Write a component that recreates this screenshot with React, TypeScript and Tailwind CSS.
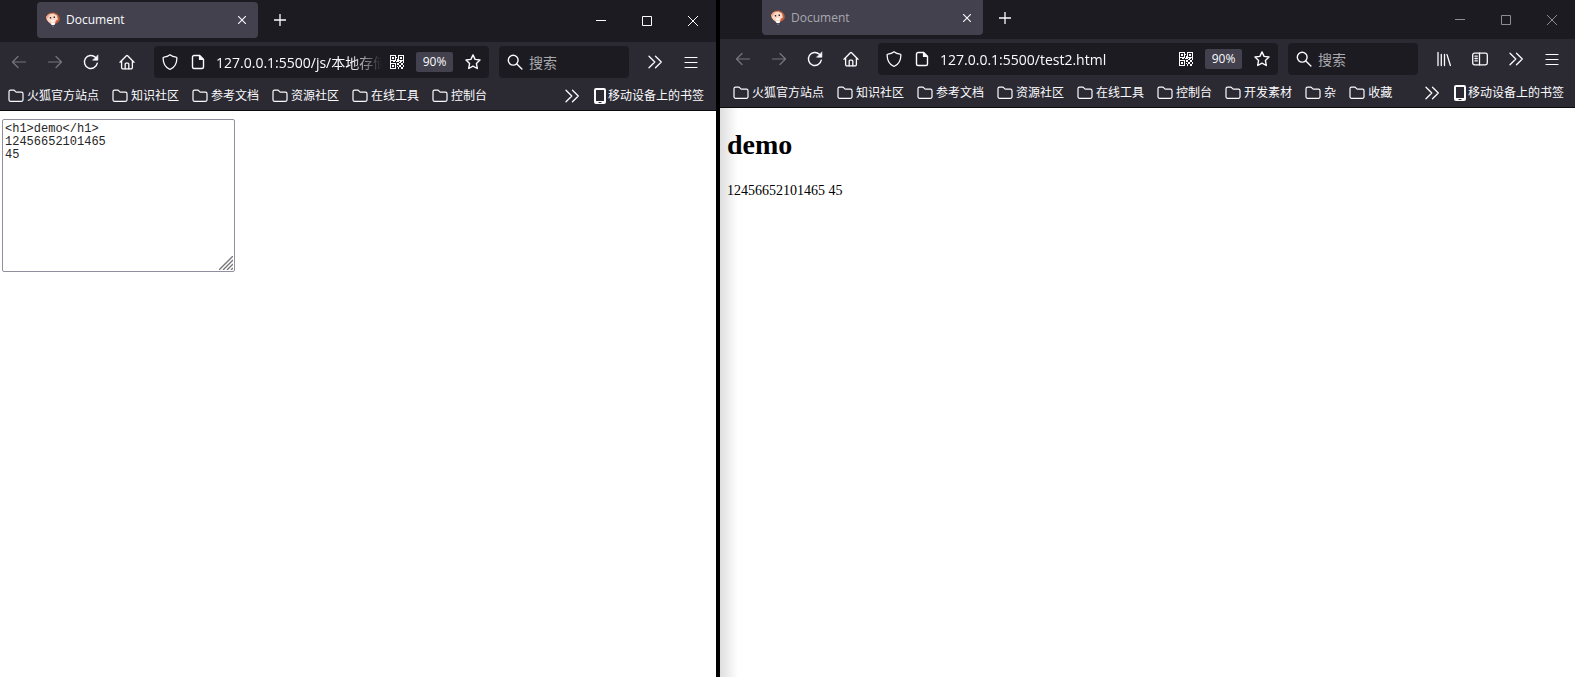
import type { ReactNode } from "react";
import clsx from "clsx";

const Icon = ({ children, size = 16 }: { children: ReactNode; size?: number }) => (
  <svg
    width={size}
    height={size}
    viewBox="0 0 16 16"
    fill="none"
    stroke="currentColor"
    strokeWidth="1.2"
    strokeLinecap="round"
    strokeLinejoin="round"
    className="shrink-0"
    aria-hidden="true"
  >
    {children}
  </svg>
);

const BackIcon = () => (
  <Icon>
    <path d="M14.5 8H1.6M7 2.5 1.5 8 7 13.5" />
  </Icon>
);

const ForwardIcon = () => (
  <Icon>
    <path d="M1.5 8h12.9M9 2.5 14.5 8 9 13.5" />
  </Icon>
);

const ReloadIcon = () => (
  <Icon>
    <path d="M14.3 9.2A6.5 6.5 0 1 1 12.4 3.3" strokeWidth="1.4" />
    <path d="M14.9 1.2v5h-5z" fill="currentColor" strokeWidth=".6" />
  </Icon>
);

const HomeIcon = () => (
  <Icon>
    <path d="M1 8.3 7.4 1.7a.9.9 0 0 1 1.2 0L15 8.3" strokeWidth="1.3" />
    <path d="M2.6 7.2v6.3a1.4 1.4 0 0 0 1.4 1.4h8a1.4 1.4 0 0 0 1.4-1.4V7.2" strokeWidth="1.3" />
    <path d="M6.2 14.8V10a.9.9 0 0 1 .9-.9h1.8a.9.9 0 0 1 .9.9v4.8" strokeWidth="1.3" />
  </Icon>
);

const ShieldIcon = () => (
  <Icon>
    <path
      d="M8 .8c-1.8 1.5-4 2.2-6.1 2.4-.5 0-.8.4-.8.9.1 5 1.8 9.2 6.4 11.1.3.1.7.1 1 0 4.600-1.900 6.300-6.100 6.400-11.100 0-.5-.3-.9-.8-.9C12 3 9.800 2.300 8 .8z"
      strokeWidth="1.3"
    />
  </Icon>
);

const PageIcon = () => (
  <Icon>
    <path
      d="M9.5 1.5H4A1.5 1.5 0 0 0 2.5 3v10A1.5 1.5 0 0 0 4 14.5h8a1.5 1.5 0 0 0 1.5-1.5V5.500z"
      strokeWidth="1.4"
    />
    <path d="M9.5 1.5v4h4z" fill="currentColor" />
  </Icon>
);

const QrIcon = () => (
  <svg
    width="14"
    height="14"
    viewBox="0 0 14 14"
    fill="currentColor"
    fillRule="evenodd"
    shapeRendering="crispEdges"
    className="shrink-0"
    aria-hidden="true"
  >
    <path d="M0 0h6v6H0zM1 1v4h4V1zM2 2h2v2H2z" />
    <path d="M8 0h6v6H8zM9 1v4h4V1zM10 2h2v2h-2z" />
    <path d="M0 8h6v6H0zM1 9v4h4V9zM2 10h2v2H2z" />
    <path d="M6 2h1v1H6zM7 4h1v2H7zM6 6h3v1H6zM3 6h2v1H3zM0 6h1v2H0zM10 6h2v1h-2zM13 6h1v2h-1z" />
    <path d="M9 7h2v1H9zM7 8h2v2H7zM11 8h2v2h-2zM9 10h2v2H9zM13 10h1v1h-1zM7 11h1v1H7zM8 12h1v2H8zM11 12h2v2h-2zM13 11h1v1h-1z" />
  </svg>
);

const StarIcon = () => (
  <Icon>
    <path
      d="m8 .9 2.1 4.5 4.900.6-3.600 3.400.9 5.100L8 12.100l-4.300 2.400.9-5.100L1 6l4.900-.6z"
      strokeWidth="1.4"
    />
  </Icon>
);

const SearchIcon = () => (
  <Icon>
    <circle cx="6.2" cy="6.2" r="4.900" strokeWidth="1.4" />
    <path d="m9.900 9.900 5 5" strokeWidth="1.4" />
  </Icon>
);

const LibraryIcon = () => (
  <Icon>
    <path d="M2 1.500v13M5.300 3.500v11M8.500 3.500v11M11 3.600l3.400 10.900" strokeWidth="1.3" />
  </Icon>
);

const SidebarIcon = () => (
  <Icon>
    <rect x=".7" y="2.2" width="14.6" height="11.6" rx="1.8" strokeWidth="1.3" />
    <path d="M7.500 2.200v11.600M3 5.200h2.300M3 7.500h2.300M3 9.800h2.300" strokeWidth="1.3" />
  </Icon>
);

const ChevronsIcon = () => (
  <Icon>
    <path d="m2 2.200 5.800 5.800L2 13.800M8.500 2.200l5.800 5.800-5.800 5.800" strokeWidth="1.3" />
  </Icon>
);

const MenuIcon = () => (
  <Icon>
    <path d="M2 3.500h12M2 8.500h12M2 13.500h12" />
  </Icon>
);

const FolderIcon = () => (
  <Icon>
    <path
      d="M1 11.800V3.700A1.500 1.500 0 0 1 2.500 2.200h3.200c.4 0 .8.2 1 .5l.8 1c.3.3.6.5 1 .5h5A1.500 1.500 0 0 1 15 5.700v6.100a1.500 1.500 0 0 1-1.500 1.500h-11A1.500 1.500 0 0 1 1 11.800z"
      strokeWidth="1.2"
    />
  </Icon>
);

const PhoneIcon = () => (
  <svg width="12" height="16" viewBox="0 0 12 16" className="shrink-0" aria-hidden="true">
    <path
      d="M2 0h8a2 2 0 0 1 2 2v12a2 2 0 0 1-2 2H2a2 2 0 0 1-2-2V2a2 2 0 0 1 2-2zM2 2v11h8V2zM4.500 14v1h3v-1z"
      fill="currentColor"
      fillRule="evenodd"
    />
  </svg>
);

const CloseIcon = () => (
  <svg width="8" height="8" viewBox="0 0 8 8" stroke="currentColor" strokeWidth="1.1" aria-hidden="true">
    <path d="m0 0 8 8M8 0 0 8" />
  </svg>
);

const PlusIcon = () => (
  <svg width="12" height="12" viewBox="0 0 12 12" stroke="currentColor" strokeWidth="1.3" aria-hidden="true">
    <path d="M6 0v12M0 6h12" />
  </svg>
);

const Favicon = () => (
  <svg width="16" height="16" viewBox="0 0 16 16" className="shrink-0" aria-hidden="true">
    <path d="M2.500 2.500 5 .8l4-.3 3.500 1.500 2 3 .3 3-1.800 2.500-3 1.500-5-.5L1.500 8 1 5z" fill="#b9603c" />
    <path d="M1.500 4.500 4.500 2l4-.5 3.500 2 .8 3.500-1.300 3-2.500 2H6.500L3.500 10 1.800 7.500z" fill="#fbd9c8" />
    <path d="M1 5 3.500 2.300 5.500 2 3.800 4.500 2 7z" fill="#efab8c" />
    <path d="M4.800 5h1.400v1.500H4.800zM8.600 4.500H10V6H8.600z" fill="#3a2226" />
    <path d="M6 8.500 9.800 8l-1 2H7z" fill="#fff" />
    <path d="m11 8.500 2-.5-.8 2.500-2 1z" fill="#d94f30" />
    <path d="M5.500 11h4.700L9.500 13h-3z" fill="#fff" />
    <path d="M7 13.500h2V15H7z" fill="#6c5a9c" />
  </svg>
);

const ToolButton = ({
  label,
  disabled,
  children,
}: {
  label: string;
  disabled?: boolean;
  children: ReactNode;
}) => (
  <button
    aria-label={label}
    disabled={disabled}
    className="flex h-8 w-9 shrink-0 items-center justify-center disabled:text-[#76757d]"
  >
    {children}
  </button>
);

const WindowControls = ({ active }: { active: boolean }) => (
  <div className={clsx("flex h-full", !active && "text-[#8e8d94]")}>
    <button aria-label="最小化" className="flex w-[46px] items-center justify-center">
      <svg width="10" height="10" viewBox="0 0 10 10" stroke="currentColor" aria-hidden="true">
        <path d="M0 4.500h10" />
      </svg>
    </button>
    <button aria-label="最大化" className="flex w-[46px] items-center justify-center">
      <svg width="10" height="10" viewBox="0 0 10 10" fill="none" stroke="currentColor" aria-hidden="true">
        <path d="M.5.5h9v9h-9z" />
      </svg>
    </button>
    <button aria-label="关闭" className="flex w-[46px] items-center justify-center">
      <svg width="10" height="10" viewBox="0 0 10 10" stroke="currentColor" aria-hidden="true">
        <path d="m0 0 10 10M10 0 0 10" />
      </svg>
    </button>
  </div>
);

const Bookmark = ({ name }: { name: string }) => (
  <button className="flex shrink-0 items-center gap-[3px]">
    <FolderIcon />
    {name}
  </button>
);

type BrowserProps = {
  id: string;
  active: boolean;
  url: string;
  bookmarks: string[];
  tools?: ReactNode;
  children: ReactNode;
};

const Browser = ({ id, active, url, bookmarks, tools, children }: BrowserProps) => (
  <section className="flex min-w-0 flex-col overflow-hidden">
    <header className="border-b border-[#0c0c0d] bg-[#2b2a33] font-['Open_Sans','Noto_Sans_CJK_SC',sans-serif] text-[#fbfbfe]">
      <div
        className={clsx(
          "flex items-center justify-between bg-[#1c1b22]",
          active ? "h-[42px] pl-[37px]" : "h-[39px] pl-[42px]"
        )}
      >
        <div className={clsx("flex items-center gap-4 self-start", active && "pt-0.5")}>
          <div
            className={clsx(
              "flex w-[221px] items-center gap-[5px] bg-[#42414d] px-2 text-xs",
              active ? "h-9 rounded" : "h-[35px] rounded-b"
            )}
          >
            <Favicon />
            <span className={clsx("flex-1", !active && "text-[#a9a8b0]")}>Document</span>
            <button aria-label="关闭标签页" className="flex size-4 items-center justify-center">
              <CloseIcon />
            </button>
          </div>
          <button aria-label="新标签页">
            <PlusIcon />
          </button>
        </div>
        <WindowControls active={active} />
      </div>

      <div className={clsx("flex items-center py-1", active ? "pr-[7px] pl-px" : "pr-[5px] pl-[5px]")}>
        <ToolButton label="后退" disabled>
          <BackIcon />
        </ToolButton>
        <ToolButton label="前进" disabled>
          <ForwardIcon />
        </ToolButton>
        <ToolButton label="刷新">
          <ReloadIcon />
        </ToolButton>
        <ToolButton label="主页">
          <HomeIcon />
        </ToolButton>

        <div className="ml-[9px] flex h-8 min-w-0 flex-1 items-center rounded bg-[#1c1b22] px-2">
          <ShieldIcon />
          <label htmlFor={`${id}-url`} aria-label="网址" className="ml-3">
            <PageIcon />
          </label>
          <input
            id={`${id}-url`}
            defaultValue={url}
            className="ml-2.5 h-8 min-w-0 flex-1 bg-transparent text-sm outline-none [mask-image:linear-gradient(to_left,transparent,#000_32px)]"
          />
          <button aria-label="二维码" className="ml-2">
            <QrIcon />
          </button>
          <button className="ml-3 h-5 w-[37px] rounded-xs bg-[#42414d] text-xs">90%</button>
          <button aria-label="添加书签" className="ml-3">
            <StarIcon />
          </button>
        </div>

        <div className="mr-2 ml-2.5 flex h-8 w-[130px] shrink-0 items-center gap-1.5 rounded bg-[#1c1b22] pl-2">
          <label htmlFor={`${id}-search`} aria-label="搜索">
            <SearchIcon />
          </label>
          <input
            id={`${id}-search`}
            placeholder="搜索"
            className="h-8 w-full min-w-0 bg-transparent text-sm outline-none placeholder:text-[#a9a9ad]"
          />
        </div>

        {tools}
        <ToolButton label="更多工具">
          <ChevronsIcon />
        </ToolButton>
        <ToolButton label="菜单">
          <MenuIcon />
        </ToolButton>
      </div>

      <nav
        className={clsx(
          "flex h-7 items-center justify-between text-xs",
          active ? "pr-3 pl-2" : "pr-[11px] pl-[13px]"
        )}
      >
        <div className="flex gap-[13px]">
          {bookmarks.map((name) => (
            <Bookmark key={name} name={name} />
          ))}
        </div>
        <div className="flex items-center gap-3.5">
          <button aria-label="更多书签">
            <ChevronsIcon />
          </button>
          <button className="flex items-center gap-0.5">
            <PhoneIcon />
            移动设备上的书签
          </button>
        </div>
      </nav>
    </header>
    {children}
  </section>
);

const folders = ["火狐官方站点", "知识社区", "参考文档", "资源社区", "在线工具", "控制台"];

export default function App() {
  return (
    <div className="grid min-h-screen grid-cols-[716fr_4px_855fr] bg-white text-black">
      <Browser id="left" active url="127.0.0.1:5500/js/本地存储/test1.html" bookmarks={folders}>
        <main className="flex-1 px-0.5 py-2">
          <div className="relative w-fit">
            <textarea
              aria-label="内容"
              defaultValue={"<h1>demo</h1>\n12456652101465\n45"}
              className="block h-[153px] w-[233px] resize-none rounded-xs border border-[#8f8f9d] px-0.5 py-[3px] font-['Liberation_Mono',monospace] text-xs leading-[13px] text-neutral-800 outline-none"
            />
            <svg
              width="14"
              height="14"
              viewBox="0 0 14 14"
              stroke="#77777b"
              strokeWidth="1.4"
              className="pointer-events-none absolute right-0.5 bottom-0.5"
              aria-hidden="true"
            >
              <path d="M0 14 14 0M4 14 14 4M8 14l6-6M12 14l2-2" />
            </svg>
          </div>
        </main>
      </Browser>

      <div className="bg-black" />

      <Browser
        id="right"
        active={false}
        url="127.0.0.1:5500/test2.html"
        bookmarks={[...folders, "开发素材", "杂", "收藏"]}
        tools={
          <>
            <ToolButton label="书库">
              <LibraryIcon />
            </ToolButton>
            <ToolButton label="侧栏">
              <SidebarIcon />
            </ToolButton>
          </>
        }
      >
        <main className="flex-1 bg-[linear-gradient(to_right,#dedede,#fff_18px)] px-[7px] py-[21px] font-['Liberation_Serif',serif]">
          <h1 className="text-[28px] leading-8 font-bold">demo</h1>
          <p className="mt-5 text-sm">12456652101465 45</p>
        </main>
      </Browser>
    </div>
  );
}
